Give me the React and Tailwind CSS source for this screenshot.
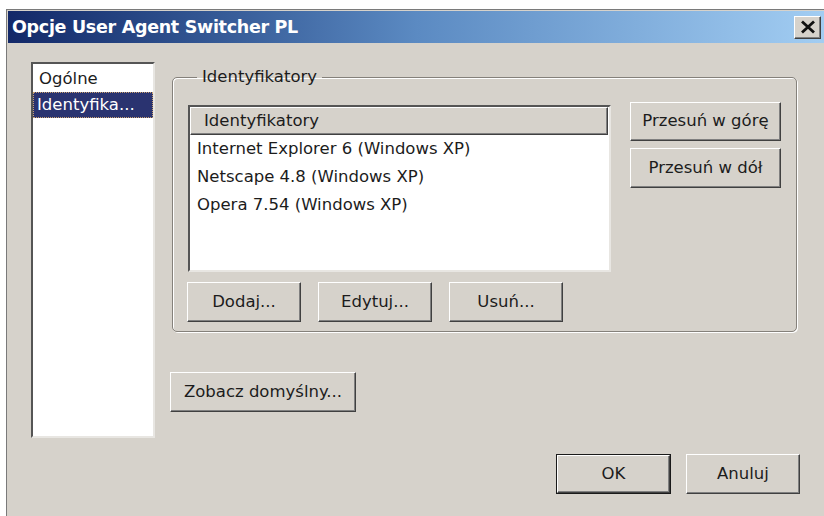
const font = { fontFamily: '"DejaVu Sans", Verdana, sans-serif' };

function Btn({ children, className = "", isDefault = false }) {
  const face =
    "flex items-center justify-center bg-[#d6d2cb] text-[16.5px] text-[#1c1c1c] border border-t-white border-l-white border-r-[#404040] border-b-[#404040] shadow-[inset_-1px_-1px_0_#808080]";
  if (isDefault) {
    return (
      <div className={`border border-[#1a1a1a] flex ${className}`}>
        <div className={`${face} flex-1`}>{children}</div>
      </div>
    );
  }
  return <div className={`${face} ${className}`}>{children}</div>;
}

export default function App() {
  const agents = [
    "Internet Explorer 6 (Windows XP)",
    "Netscape 4.8 (Windows XP)",
    "Opera 7.54 (Windows XP)",
  ];

  return (
    <div className="w-[824px] h-[516px] bg-white pt-[9px] pl-[6px] overflow-hidden" style={font}>
      <div className="h-full flex flex-col border-t border-l border-[#7a7a7a] bg-[#d6d2cb] pt-px pl-px">
        {/* title bar */}
        <div className="h-[32px] flex items-center justify-between pl-[4px] pr-[3px] bg-gradient-to-r from-[#132868] via-[#5b8ac2] to-[#a2cdf2]">
          <span className="text-white font-bold text-[17.5px] tracking-[-0.3px]">Opcje User Agent Switcher PL</span>
          <div className="w-[27px] h-[23px] flex items-center justify-center bg-[#d6d2cb] border border-t-white border-l-white border-r-[#404040] border-b-[#404040] shadow-[inset_-1px_-1px_0_#808080]">
            <svg width="16" height="14" viewBox="0 0 16 14">
              <path d="M2 1.5 L14 12.5 M14 1.5 L2 12.5" stroke="#111" strokeWidth="2.8" />
            </svg>
          </div>
        </div>

        {/* dialog body */}
        <div className="flex-1 flex flex-col pt-[19px] pl-[23px] pr-[23px]">
          <div className="flex">
            {/* page list */}
            <div className="w-[124px] h-[376px] bg-white border-2 border-t-[#555] border-l-[#555] border-r-[#e8e6e2] border-b-[#e8e6e2] pt-[2px] text-[16.5px]">
              <div className="h-[26px] flex items-center pl-[6px] text-[#1c1c1c]">Ogólne</div>
              <div className="h-[26px] flex items-center pl-[3px] bg-[#2a3370] text-white border border-dotted border-[#c8a070]">
                Identyfika...
              </div>
            </div>

            <div className="ml-[17px] flex flex-col">
              <fieldset className="mt-[5px] w-[623px] h-[265px] border border-[#85817b] rounded-[5px] shadow-[1px_1px_0_#fff,inset_1px_1px_0_#fff] px-[15px] pt-[18px]">
                <legend className="ml-[9px] px-[5px] text-[16.5px] text-[#1c1c1c] leading-[20px]">Identyfikatory</legend>
                <div className="flex">
                  {/* list view */}
                  <div className="w-[423px] h-[167px] bg-white border-2 border-t-[#555] border-l-[#555] border-r-[#e8e6e2] border-b-[#e8e6e2] text-[16.5px] text-[#1c1c1c]">
                    <div className="h-[28px] mr-px flex items-center pl-[13px] bg-[#d6d2cb] border border-t-white border-l-white border-r-[#404040] border-b-[#404040] shadow-[inset_-1px_-1px_0_#808080]">
                      Identyfikatory
                    </div>
                    {agents.map((a) => (
                      <div key={a} className="h-[28px] flex items-center pl-[7px]">
                        {a}
                      </div>
                    ))}
                  </div>
                  <div className="ml-[19px] -mt-[3px] flex flex-col gap-[7px]">
                    <Btn className="w-[151px] h-[39px]">Przesuń w górę</Btn>
                    <Btn className="w-[151px] h-[40px]">Przesuń w dół</Btn>
                  </div>
                </div>
                <div className="flex gap-[17px] mt-[10px] -ml-px">
                  <Btn className="w-[114px] h-[40px]">Dodaj...</Btn>
                  <Btn className="w-[114px] h-[40px]">Edytuj...</Btn>
                  <Btn className="w-[114px] h-[40px]">Usuń...</Btn>
                </div>
              </fieldset>
              <div className="mt-[40px] -ml-[2px]">
                <Btn className="w-[186px] h-[40px]">Zobacz domyślny...</Btn>
              </div>
            </div>
          </div>

          <div className="flex justify-end gap-[15px] mt-[16px] pr-px">
            <Btn isDefault className="w-[115px] h-[40px]">OK</Btn>
            <Btn className="w-[114px] h-[40px]">Anuluj</Btn>
          </div>
        </div>
      </div>
    </div>
  );
}
